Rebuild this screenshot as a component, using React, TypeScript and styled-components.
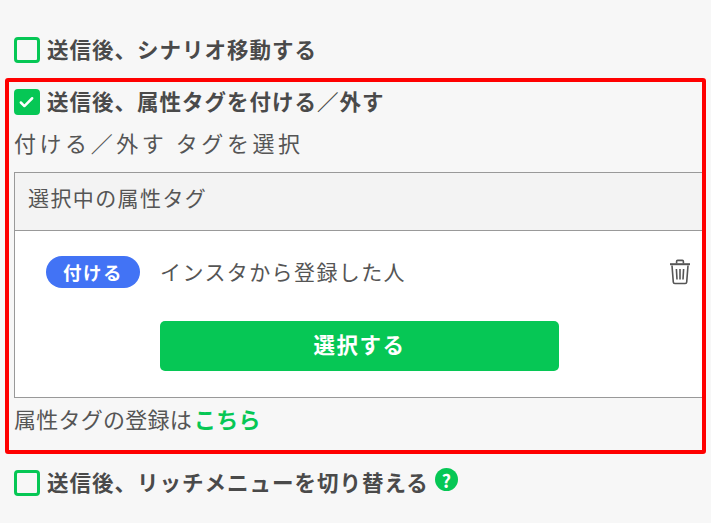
import { styled, createGlobalStyle } from "styled-components";
import { Check } from "lucide-react";

const GlobalStyle = createGlobalStyle`
  html, body {
    margin: 0;
    padding: 0;
    background: #f7f7f7;
    font-family: "Noto Sans CJK JP", "Noto Sans", sans-serif;
    color: #4a4a4a;
  }
`;

const TrashIcon = () => (
  <svg width="22" height="26" viewBox="0 0 22 26" fill="none" stroke="#555" strokeWidth="1.6">
    <path d="M1 5.2h20" strokeWidth="2" />
    <path d="M7.6 4.6V2.4c0-.6.4-1 1-1h4.8c.6 0 1 .4 1 1v2.2" />
    <path d="M3 6.5l1.3 16.6c.1.9.6 1.4 1.5 1.4h10.4c.9 0 1.4-.5 1.5-1.4L19 6.5" />
    <path d="M7.4 10l.6 10.5M11 10v10.5M14.6 10L14 20.5" />
  </svg>
);

const App = () => {
  return (
    <Page>
      <GlobalStyle />
      <CheckRow>
        <CheckBox />
        <CheckLabel>送信後、シナリオ移動する</CheckLabel>
      </CheckRow>
      <Highlight>
        <CheckRow>
          <CheckBox $checked>
            <Check size={17} color="#fff" strokeWidth={3.5} />
          </CheckBox>
          <CheckLabel>送信後、属性タグを付ける／外す</CheckLabel>
        </CheckRow>
        <SectionTitle>付ける／外す タグを選択</SectionTitle>
        <Panel>
          <PanelHeader>選択中の属性タグ</PanelHeader>
          <PanelBody>
            <TagRow>
              <Badge>付ける</Badge>
              <TagName>インスタから登録した人</TagName>
              <TrashButton>
                <TrashIcon />
              </TrashButton>
            </TagRow>
            <SelectButton>選択する</SelectButton>
          </PanelBody>
        </Panel>
        <Note>
          属性タグの登録は<NoteLink>こちら</NoteLink>
        </Note>
      </Highlight>
      <CheckRow>
        <CheckBox />
        <CheckLabel>送信後、リッチメニューを切り替える</CheckLabel>
        <HelpIcon>?</HelpIcon>
      </CheckRow>
    </Page>
  );
};

export default App;

const Page = styled.div`
  width: 711px;
  height: 523px;
  box-sizing: border-box;
  padding: 37px 5px 0;
  overflow: hidden;
`;

const CheckRow = styled.div`
  display: flex;
  align-items: center;
  height: 26px;
  padding-left: 8.5px;
`;

const CheckBox = styled.span<{ $checked?: boolean }>`
  display: flex;
  align-items: center;
  justify-content: center;
  width: 26px;
  height: 26px;
  box-sizing: border-box;
  border: 3px solid #06c755;
  border-radius: 4px;
  background: ${(p) => (p.$checked ? "#06c755" : "transparent")};
  flex: none;
`;

const CheckLabel = styled.span`
  margin-left: 7.5px;
  padding-bottom: 2px;
  font-size: 21.5px;
  font-weight: 700;
  letter-spacing: 1px;
  line-height: 26px;
  white-space: nowrap;
`;

const Highlight = styled.div`
  width: 701px;
  height: 376px;
  box-sizing: border-box;
  margin: 15px 0 16px;
  padding: 7px 0 0 0;
  border: 4px solid #f00;
  border-radius: 3px;
  & > ${CheckRow} {
    padding-left: 4.5px;
  }
`;

const SectionTitle = styled.div`
  margin-top: 11px;
  padding-left: 5px;
  font-size: 22px;
  letter-spacing: 3.55px;
  line-height: 32px;
  color: #555;
  white-space: nowrap;
`;

const Panel = styled.div`
  margin: 14px 0 0 5px;
  height: 226px;
  box-sizing: border-box;
  border-top: 1px solid #999;
  border-bottom: 1px solid #999;
  border-left: 1px solid #999;
  background: #fff;
  display: flex;
  flex-direction: column;
`;

const PanelHeader = styled.div`
  height: 58px;
  flex: none;
  box-sizing: border-box;
  display: flex;
  align-items: center;
  padding: 0 0 10px 13px;
  background: #f3f3f3;
  border-bottom: 1px solid #999;
  font-size: 21px;
  letter-spacing: 1.4px;
  color: #555;
`;

const PanelBody = styled.div`
  flex: 1;
  display: flex;
  flex-direction: column;
  align-items: center;
  padding-left: 2px;
`;

const TagRow = styled.div`
  align-self: stretch;
  display: flex;
  align-items: center;
  margin-top: 25px;
  padding: 0 11px 0 29px;
  height: 32px;
`;

const Badge = styled.span`
  display: flex;
  align-items: center;
  justify-content: center;
  width: 94px;
  height: 32px;
  border-radius: 16px;
  background: #4273f5;
  color: #fff;
  font-size: 18.5px;
  font-weight: 700;
  letter-spacing: 1.5px;
`;

const TagName = styled.span`
  margin-left: 20px;
  padding-bottom: 2px;
  font-size: 21px;
  letter-spacing: 1.4px;
  color: #555;
  flex: 1;
  white-space: nowrap;
`;

const TrashButton = styled.span`
  display: flex;
  width: 22px;
  height: 26px;
`;

const SelectButton = styled.button`
  margin-top: 33px;
  width: 399px;
  height: 50px;
  border: none;
  border-radius: 5px;
  padding: 0 0 5px;
  background: #06c755;
  color: #fff;
  font-family: inherit;
  font-size: 21.5px;
  font-weight: 700;
  letter-spacing: 1.5px;
`;

const Note = styled.div`
  margin-top: 5px;
  padding-left: 5px;
  font-size: 22px;
  letter-spacing: 0.25px;
  line-height: 30px;
  color: #555;
  white-space: nowrap;
`;

const NoteLink = styled.span`
  margin-left: 2px;
  color: #06c755;
  font-weight: 700;
`;

const HelpIcon = styled.span`
  display: flex;
  align-items: center;
  justify-content: center;
  width: 23px;
  height: 23px;
  margin: -7px 0 0 6px;
  border-radius: 50%;
  background: #06c755;
  color: #fff;
  font-size: 18px;
  font-weight: 700;
`;
